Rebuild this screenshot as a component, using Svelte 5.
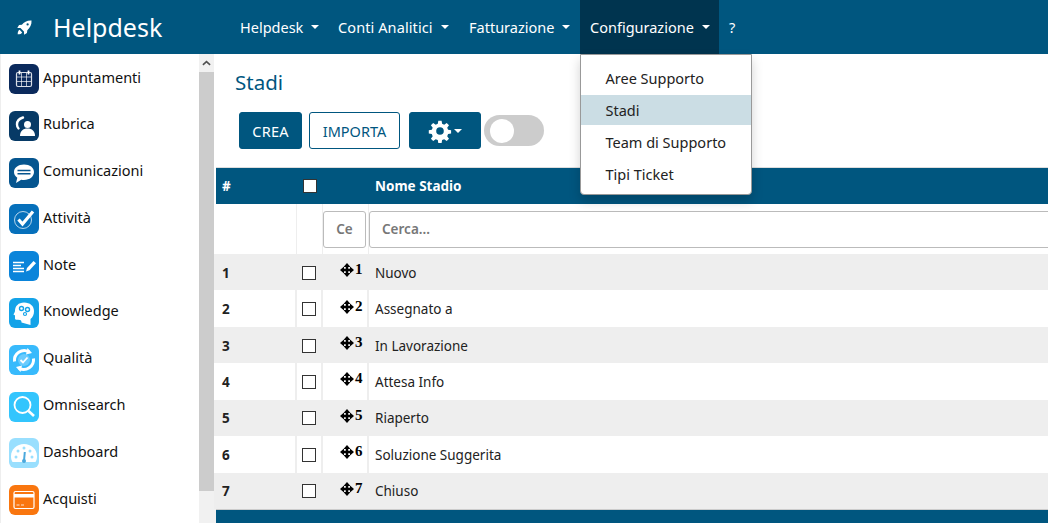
<script>
  const menu = ['Helpdesk', 'Conti Analitici', 'Fatturazione', 'Configurazione'];
  const dropdown = ['Aree Supporto', 'Stadi', 'Team di Supporto', 'Tipi Ticket'];
  const apps = [
    { name: 'Appuntamenti', color: '#0b2a5c', icon: 'cal' },
    { name: 'Rubrica', color: '#073a66', icon: 'phone' },
    { name: 'Comunicazioni', color: '#05558f', icon: 'chat' },
    { name: 'Attività', color: '#0670bb', icon: 'check' },
    { name: 'Note', color: '#0a84da', icon: 'note' },
    { name: 'Knowledge', color: '#14a3e8', icon: 'head' },
    { name: 'Qualità', color: '#38bafc', icon: 'quality' },
    { name: 'Omnisearch', color: '#33c5fd', icon: 'search' },
    { name: 'Dashboard', color: '#99dffe', icon: 'gauge' },
    { name: 'Acquisti', color: '#f9760f', icon: 'card' }
  ];
  const stages = ['Nuovo', 'Assegnato a', 'In Lavorazione', 'Attesa Info', 'Riaperto', 'Soluzione Suggerita', 'Chiuso'];
</script>

<div class="page">
  <header class="topbar">
    <div class="brand">
      <svg class="rocket" viewBox="0 0 16 16" width="15" height="15">
        <path fill="#fff" d="M15.500.500C11 .200 7.500 2 5.200 5L2.200 5.400.300 8.400l3.400.2 3.700 3.700.2 3.400 3-1.900.4-3C13.800 8.500 15.800 5 15.500.500z" />
        <circle cx="11.300" cy="4.700" r="1.200" fill="#00567f" />
        <path fill="#fff" d="M2.800 10.500C1.500 11 .800 12.800.700 15.300c2.500-.1 4.300-.8 4.800-2.100z" />
      </svg>
      <span class="brand-name">Helpdesk</span>
    </div>
    <nav class="nav">
      {#each menu as item, i}
        <div class="nav-item" class:open={i === 3}>{item}<span class="caret"></span></div>
      {/each}
      <div class="nav-item help">?</div>
    </nav>
  </header>

  <div class="main">
    <aside class="sidebar">
      <ul class="apps">
        {#each apps as app}
          <li class="app">
            <span class="tile" style="background: {app.color}">
              <svg viewBox="0 0 30 30" width="30" height="30" fill="none" stroke="#fff">
                {#if app.icon === 'cal'}
                  <rect x="7.500" y="8.500" width="15" height="14" rx="1.500" stroke-width="1.200" opacity=".85" />
                  <path d="M8 13h14M8 17.500h14M12.500 9v13M17.500 9v13" stroke-width=".9" opacity=".75" />
                  <path d="M10.500 6.500v4M19.500 6.500v4" stroke-width="1.800" />
                {:else if app.icon === 'phone'}
                  <path d="M14 6.500c-3.500 1-6 3.500-6 7 0 1.500.5 3 1.500 4" stroke-width="2.400" stroke-linecap="round" />
                  <circle cx="18.500" cy="13.500" r="3.500" fill="#fff" stroke="none" />
                  <path d="M11 25c0-5 3-7.500 7.500-7.500S26 20 26 25z" fill="#fff" stroke="none" />
                {:else if app.icon === 'chat'}
                  <path d="M15 6.500c-5.800 0-10 3.300-10 7.500 0 2.300 1.300 4.300 3.300 5.700L7 25l5.200-3.200c.9.200 1.800.2 2.800.2 5.800 0 10-3.600 10-8s-4.200-7.500-10-7.500z" fill="#fff" stroke="none" />
                  <path d="M8.500 12.500h13M8.500 15.800h13" stroke="#05558f" stroke-width="1.500" />
                {:else if app.icon === 'check'}
                  <circle cx="14" cy="16" r="8.500" stroke-width="1" opacity=".7" />
                  <path d="M9.500 15.500l4 4.500L24 7.500" stroke-width="3.200" />
                {:else if app.icon === 'note'}
                  <path d="M4 11.500h11M4 14.500h8M4 17.500h11M4 20.500h11" stroke-width="1.700" />
                  <path d="M17 20.500l1-3.500 6.500-7 2.500 2.300-6.500 7z" fill="#fff" stroke="none" />
                {:else if app.icon === 'head'}
                  <path d="M15 4.500c-5.500 0-9 3.500-9 8.500 0 1-1.500 3-1.500 3.500s1.500.5 1.500 1v3c0 1 1 1.500 3 1.300l2 .2c1 0 1.500 1 1.500 2.500l9 2.500v-6c2.500-2 3.500-4.500 3.500-8 0-5-4-8.500-10-8.500z" fill="#fff" stroke="none" />
                  <circle cx="12.500" cy="10.500" r="2" stroke="#14a3e8" stroke-width="1.400" />
                  <circle cx="18.500" cy="11.500" r="2" stroke="#14a3e8" stroke-width="1.400" />
                  <circle cx="16" cy="16" r="1.500" stroke="#14a3e8" stroke-width="1.200" />
                {:else if app.icon === 'quality'}
                  <path d="M5.500 16.500A9.800 9.800 0 0 1 20 6.800M24.500 13.500A9.800 9.800 0 0 1 10 23.200" stroke-width="3" />
                  <path d="M18.500 3l4.500 5-6 1.500zM11.500 27L7 22l6-1.500z" fill="#fff" stroke="none" />
                  <circle cx="15" cy="15" r="6" fill="#fff" fill-opacity=".25" stroke="none" />
                  <path d="M11.500 15l2.500 2.500 4.500-5" stroke-width="1.800" />
                {:else if app.icon === 'search'}
                  <circle cx="13.500" cy="13" r="8" stroke-width="1.800" />
                  <path d="M19.500 19l5.500 5" stroke-width="2.600" />
                {:else if app.icon === 'gauge'}
                  <path d="M3.500 24C2 21.500 2 19.500 2 18 2 11 8 6 15 6s13 5 13 12c0 1.500 0 3.500-1.500 6z" fill="#fff" stroke="none" />
                  <path d="M15 23l.8-9" stroke="#4aa8dc" stroke-width="2" />
                  <circle cx="15" cy="23" r="2" fill="#4aa8dc" stroke="none" />
                  <g fill="#99dffe" stroke="none">
                    <circle cx="7" cy="19" r="1.500" /><circle cx="9" cy="13" r="1.500" /><circle cx="15" cy="10" r="1.500" /><circle cx="21" cy="13" r="1.500" /><circle cx="23" cy="19" r="1.500" />
                  </g>
                {:else if app.icon === 'card'}
                  <rect x="5" y="6.500" width="20" height="17" rx="1.500" stroke-width="1.200" />
                  <rect x="5" y="9" width="20" height="3.500" fill="#fff" stroke="none" />
                  <path d="M7.500 20h3M12 20h3" stroke-width="1" opacity=".8" />
                {/if}
              </svg>
            </span>
            <span class="app-name">{app.name}</span>
          </li>
        {/each}
      </ul>
      <div class="scrollbar">
        <div class="scroll-up">
          <svg viewBox="0 0 10 6" width="9" height="6"><path d="M1 5l4-3.500L9 5" fill="none" stroke="#505050" stroke-width="1.800" /></svg>
        </div>
        <div class="scroll-thumb"></div>
      </div>
    </aside>

    <section class="content">
      <h1 class="title">Stadi</h1>
      <div class="toolbar">
        <button class="btn solid">CREA</button>
        <button class="btn outline">IMPORTA</button>
        <button class="btn solid gear">
          <svg viewBox="0 0 24 24" width="24" height="24">
            <path fill="#fff" fill-rule="evenodd" d="M13.600 1.800l.5 3 2.100.9 2.500-1.800 2.300 2.300-1.800 2.500.9 2.100 3 .5v3.300l-3 .5-.9 2.100 1.800 2.500-2.300 2.300-2.500-1.800-2.100.9-.5 3h-3.300l-.5-3-2.100-.9-2.500 1.800-2.300-2.300 1.800-2.500-.9-2.100-3-.5v-3.300l3-.5.9-2.100-1.800-2.500 2.300-2.300 2.500 1.800 2.100-.9.500-3zM12 8.200a3.800 3.800 0 1 0 0 7.600 3.800 3.800 0 0 0 0-7.600z" />
          </svg>
          <span class="caret"></span>
        </button>
        <div class="toggle"><span class="knob"></span></div>
      </div>

      <div class="table">
        <div class="row head">
          <div class="c-num">#</div>
          <div class="c-check"><span class="box"></span></div>
          <div class="c-move"></div>
          <div class="c-name">Nome Stadio</div>
        </div>
        <div class="row filter">
          <div class="c-num"></div>
          <div class="c-check"></div>
          <div class="c-move"><span class="search-btn">Ce</span></div>
          <div class="c-name"><span class="search-input">Cerca...</span></div>
        </div>
        {#each stages as stage, i}
          <div class="row item" class:odd={i % 2 === 0}>
            <div class="c-num">{i + 1}</div>
            <div class="c-check"><span class="box"></span></div>
            <div class="c-move">
              <svg class="move" viewBox="0 0 14 14" width="14" height="14">
                <path fill="#000" d="M7 0l3.500 4H8.200v1.800H10V3.500L14 7l-4 3.500V8.200H8.200V10h2.300L7 14l-3.500-4h2.300V8.200H4v2.300L0 7l4-3.500v2.300h1.800V4H3.500z" />
              </svg>
              <span class="seq">{i + 1}</span>
            </div>
            <div class="c-name">{stage}</div>
          </div>
        {/each}
        <div class="foot"></div>
      </div>
    </section>
  </div>

  <div class="dropdown">
    {#each dropdown as entry}
      <div class="drop-item" class:active={entry === 'Stadi'}>{entry}</div>
    {/each}
  </div>
</div>

<style>
  :global(body) {
    margin: 0;
    overflow: hidden;
    font-family: "Noto Sans", "Open Sans", sans-serif;
  }

  .page {
    position: relative;
    width: 1048px;
    height: 523px;
    overflow: hidden;
    background: #fff;
  }

  .topbar {
    display: flex;
    align-items: center;
    height: 54px;
    background: #00567f;
    color: #fff;
  }

  .brand {
    display: flex;
    align-items: center;
    width: 230px;
    padding-left: 17px;
    box-sizing: border-box;
  }

  .rocket {
    margin-right: 21px;
  }

  .brand-name {
    font-size: 25px;
  }

  .nav {
    display: flex;
    height: 54px;
  }

  .nav-item {
    display: flex;
    align-items: center;
    padding-left: 10px;
    box-sizing: border-box;
    font-size: 14.500px;
  }

  .nav-item:nth-child(1) { width: 98px; }
  .nav-item:nth-child(2) { width: 131px; letter-spacing: 0.1px; }
  .nav-item:nth-child(3) { width: 121px; }
  .nav-item:nth-child(4) { width: 139px; }

  .nav-item.open {
    background: #00344f;
  }

  .caret {
    display: inline-block;
    margin-left: 8px;
    border-top: 4px solid #fff;
    border-left: 4px solid transparent;
    border-right: 4px solid transparent;
  }

  .main {
    display: flex;
    height: 469px;
  }

  .sidebar {
    display: flex;
    width: 216px;
    flex: none;
    border-left: 1px solid #eee;
    box-sizing: border-box;
  }

  .apps {
    flex: 1;
    margin: 0;
    padding: 10px 0 0 8px;
    list-style: none;
  }

  .app {
    display: flex;
    align-items: center;
    height: 30px;
    margin-bottom: 16.800px;
    color: #111;
    font-size: 14.500px;
  }

  .tile {
    display: flex;
    width: 30px;
    height: 30px;
    margin-right: 4px;
    border-radius: 6px;
  }

  .app-name {
    margin-top: -5px;
  }

  .scrollbar {
    display: flex;
    flex-direction: column;
    width: 15px;
    margin-right: 2px;
    background: #f1f1f1;
  }

  .scroll-up {
    display: flex;
    align-items: center;
    justify-content: center;
    height: 18px;
  }

  .scroll-thumb {
    height: 419px;
    background: #ccc;
  }

  .content {
    flex: 1;
    min-width: 0;
  }

  .title {
    margin: 0;
    padding: 15px 0 0 19px;
    height: 43px;
    color: #00567f;
    font-size: 20.500px;
    font-weight: 400;
    line-height: 26px;
    box-sizing: content-box;
  }

  .toolbar {
    display: flex;
    align-items: center;
    height: 37px;
    margin-left: 23px;
  }

  .btn {
    height: 37px;
    box-sizing: border-box;
    border-radius: 3px;
    font-family: inherit;
    font-size: 14.500px;
    padding: 0;
  }

  .btn.solid {
    width: 63px;
    border: 1px solid #00567f;
    background: #00567f;
    color: #fff;
    letter-spacing: 0.2px;
  }

  .btn.outline {
    width: 91px;
    margin: 0 9px 0 7px;
    border: 1px solid #00567f;
    background: #fff;
    color: #00567f;
  }

  .btn.gear {
    display: flex;
    align-items: center;
    justify-content: center;
    width: 72px;
  }

  .btn.gear .caret {
    margin-left: 2px;
  }

  .toggle {
    display: flex;
    align-items: center;
    width: 60px;
    height: 31px;
    margin-left: 3px;
    padding-left: 6px;
    box-sizing: border-box;
    border-radius: 16px;
    background: #ccc;
  }

  .knob {
    width: 24px;
    height: 24px;
    border-radius: 50%;
    background: #fff;
  }

  .table {
    margin-top: 18px;
    border-top: 1px solid #ddd;
    font-size: 13.500px;
    color: #222;
  }

  .row {
    display: flex;
    align-items: center;
  }

  .c-num {
    flex: none;
    width: 81px;
    padding-left: 6px;
    box-sizing: border-box;
    font-weight: 700;
  }

  .c-check {
    display: flex;
    flex: none;
    justify-content: center;
    width: 26px;
  }

  .c-move {
    flex: none;
    width: 46px;
  }

  .c-name {
    flex: 1;
    min-width: 0;
    padding-left: 6px;
  }

  .head {
    height: 36px;
    background: #00567f;
    color: #fff;
  }

  .head .c-name {
    font-weight: 700;
  }

  .filter {
    height: 50px;
    align-items: stretch;
  }

  .filter > div {
    display: flex;
    align-items: center;
    border-right: 1px solid #eee;
    box-sizing: border-box;
  }

  .search-btn,
  .search-input {
    display: flex;
    align-items: center;
    flex: none;
    height: 37px;
    box-sizing: border-box;
    border: 1px solid #bbb;
    border-radius: 3px;
    color: #777;
    font-weight: 600;
  }

  .search-btn {
    justify-content: center;
    width: 43px;
  }

  .search-input {
    width: 800px;
    padding-left: 12px;
  }

  .filter .c-name {
    padding-left: 0;
    border-right: 0;
  }

  .item {
    height: 36.430px;
    align-items: stretch;
    margin-left: -2px;
    padding-left: 2px;
  }

  .item.odd {
    background: #eee;
  }

  .item > div {
    display: flex;
    align-items: center;
    padding-top: 1px;
    box-sizing: border-box;
  }

  .item > div:not(.c-name) {
    border-right: 2px solid #eee;
  }

  .box {
    width: 12px;
    height: 12px;
    border: 1px solid #333;
    background: #fff;
  }

  .move {
    margin-left: 17px;
    margin-top: -5px;
  }

  .seq {
    margin: -6px 0 0 1px;
    font-family: "Liberation Serif", serif;
    font-size: 15px;
    font-weight: 700;
    color: #000;
  }

  .foot {
    height: 14px;
    border-top: 1px solid #ccc;
    box-sizing: border-box;
    background: #00567f;
    box-shadow: -2px 0 0 #f1f1f1;
  }

  .dropdown {
    position: absolute;
    top: 54px;
    left: 580px;
    width: 172px;
    padding-top: 8px;
    padding-bottom: 5px;
    box-sizing: border-box;
    background: #fff;
    border: 1px solid #999;
    border-radius: 0 0 4px 4px;
    box-shadow: 0 6px 12px rgba(0, 0, 0, 0.18);
    font-size: 14.500px;
    color: #222;
  }

  .drop-item {
    display: flex;
    align-items: center;
    height: 30px;
    padding-left: 24.500px;
  }

  .drop-item + .drop-item {
    margin-top: 2px;
  }

  .drop-item.active {
    background: #cbdde4;
  }
</style>
